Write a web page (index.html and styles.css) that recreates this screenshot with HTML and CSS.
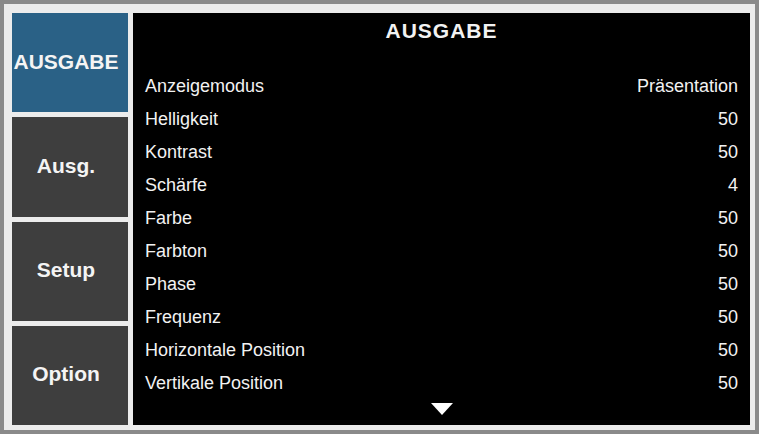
FILE: index.html
```html
<!DOCTYPE html>
<html lang="de">
<head>
  <meta charset="UTF-8">
  <meta name="viewport" content="width=device-width, initial-scale=1.0">
  <title>OSD Menü</title>
  <link rel="stylesheet" href="styles.css">
</head>
<body>
  <div class="frame">
    <nav class="tabs">
      <div class="tab active">AUSGABE</div>
      <div class="tab">Ausg.</div>
      <div class="tab">Setup</div>
      <div class="tab">Option</div>
    </nav>

    <section class="panel">
      <h1>AUSGABE</h1>
      <ul class="menu">
        <li><span>Anzeigemodus</span><span>Präsentation</span></li>
        <li><span>Helligkeit</span><span>50</span></li>
        <li><span>Kontrast</span><span>50</span></li>
        <li><span>Schärfe</span><span>4</span></li>
        <li><span>Farbe</span><span>50</span></li>
        <li><span>Farbton</span><span>50</span></li>
        <li><span>Phase</span><span>50</span></li>
        <li><span>Frequenz</span><span>50</span></li>
        <li><span>Horizontale Position</span><span>50</span></li>
        <li><span>Vertikale Position</span><span>50</span></li>
      </ul>
      <div class="more"></div>
    </section>
  </div>
</body>
</html>
```

FILE: styles.css
```css
* {
  box-sizing: border-box;
}
body {
  margin: 0;
  font-family: 'Liberation Sans', Arial, sans-serif;
  background: #8a8a8a;
}
.frame {
  width: 759px;
  height: 434px;
  border: 4px solid #8a8a8a;
  background: #ececec;
  padding: 9px 5px 5px 8px;
  display: flex;
  gap: 5px;
}
.tabs {
  width: 116px;
  display: flex;
  flex-direction: column;
  gap: 5px;
}
.tab {
  flex: 1;
  display: flex;
  align-items: center;
  justify-content: center;
  padding: 0 8px 2px 0;
  background: #3e3e3e;
  color: #f4f4f4;
  font-size: 21px;
  font-weight: bold;
}
.tab.active {
  background: #2a6186;
}
.panel {
  flex: 1;
  background: #000;
  color: #f2f2f2;
  padding: 0 12px;
}
.panel h1 {
  margin: 0 0 21px;
  line-height: 36px;
  font-size: 21px;
  letter-spacing: 1px;
  text-align: center;
}
.menu {
  list-style: none;
  margin: 0;
  padding: 0;
}
.menu li {
  display: flex;
  justify-content: space-between;
  height: 33px;
  line-height: 33px;
  font-size: 18px;
}
.more {
  width: 0;
  height: 0;
  margin: 3px auto 0;
  border-left: 11px solid transparent;
  border-right: 11px solid transparent;
  border-top: 12px solid #fff;
}
```
